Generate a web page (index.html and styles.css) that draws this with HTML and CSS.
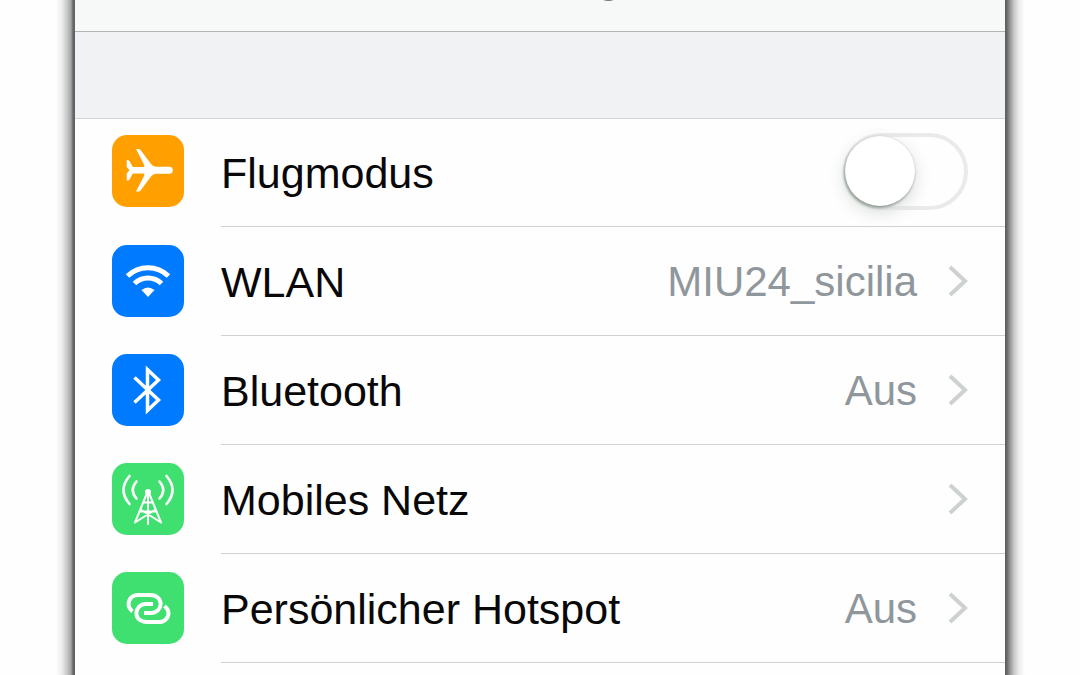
FILE: index.html
```html
<!DOCTYPE html>
<html lang="de">
<head>
<meta charset="utf-8">
<meta name="viewport" content="width=device-width">
<title>Einstellungen</title>
<link rel="stylesheet" href="styles.css">
</head>
<body>
<div class="edge edge-left"></div>
<main class="panel">
  <header class="navbar"><h1 class="title">Einstellungen</h1></header>
  <div class="spacer"></div>
  <ul class="list">
    <li class="item">
      <svg class="icon orange" viewBox="0 0 72 72" aria-hidden="true"><path fill="#fff" d="M14.700 25H16Q17 25 17.800 26.500L20.500 31.500Q21 32 22 32H31Q33 32 32 29.500L24 14H26.500Q28 14 29 15.500L39 29Q41 31.700 44 31.700H57.500C62 31.700 62 38.800 57.500 38.800H44Q41 38.800 39 41.500L29 55Q28 56.500 26.500 56.500H24L32 41Q33 38.500 31 38.500H22Q21 38.500 20.500 39L17.800 44Q17 45.500 16 45.500H14.700V38.500L17.500 35.300L14.700 32Z"/></svg>
      <div class="body">
        <label class="label" for="flight">Flugmodus</label>
        <input class="switch" type="checkbox" role="switch" id="flight">
      </div>
    </li>
    <li><a class="item" href="#wlan">
      <svg class="icon blue" viewBox="0 0 72 72" aria-hidden="true"><g fill="none" stroke="#fff" stroke-width="5"><path d="M15.500 31C27 20 45 20 56.500 31"/><path d="M22.500 38.500C30 31 42 31 49.500 38.500"/></g><path fill="#fff" d="M29.500 45Q36 40 42.500 45L36 52Z"/></svg>
      <div class="body"><span class="label">WLAN</span><span class="value">MIU24_sicilia</span>
      <svg class="chevron" viewBox="0 0 20 34" aria-hidden="true"><path d="M2 3L17 17L2 31"/></svg></div>
    </a></li>
    <li><a class="item" href="#bluetooth">
      <svg class="icon blue" viewBox="0 0 72 72" aria-hidden="true"><path fill="none" stroke="#fff" stroke-width="3.500" d="M22.500 23.500L46.500 46L35.500 56.500V15.500L46.500 26L22.500 48.500"/></svg>
      <div class="body"><span class="label">Bluetooth</span><span class="value">Aus</span>
      <svg class="chevron" viewBox="0 0 20 34" aria-hidden="true"><path d="M2 3L17 17L2 31"/></svg></div>
    </a></li>
    <li><a class="item" href="#mobil">
      <svg class="icon green" viewBox="0 0 72 72" aria-hidden="true"><g fill="none" stroke="#fff" stroke-width="2.600" stroke-linecap="round"><path d="M17.500 13Q5.500 27 17.500 41M24.500 18.500Q17 27 24.500 35.500M54.500 13Q66.500 27 54.500 41M47.500 18.500Q55 27 47.500 35.500"/><path stroke-width="2" stroke-linejoin="round" d="M36 30V61M35 30L23 59.500L43.500 46.500M37 30L49 59.500L28.500 46.500M31.500 39.500H40.500M28 48.500H44"/></g><circle cx="36" cy="29" r="3" fill="#fff"/></svg>
      <div class="body"><span class="label">Mobiles Netz</span>
      <svg class="chevron" viewBox="0 0 20 34" aria-hidden="true"><path d="M2 3L17 17L2 31"/></svg></div>
    </a></li>
    <li><a class="item" href="#hotspot">
      <svg class="icon green" viewBox="0 0 72 72" aria-hidden="true"><g fill="none" stroke="#fff" stroke-width="4"><path d="M20.500 39.500C12.500 32.500 18 23 26 23H38C53 23 51 41 39 41H32"/><path d="M52.500 34C60.500 41 55 50 47 50H35C20 50 22 32 34 32H41"/></g></svg>
      <div class="body"><span class="label">Persönlicher Hotspot</span><span class="value">Aus</span>
      <svg class="chevron" viewBox="0 0 20 34" aria-hidden="true"><path d="M2 3L17 17L2 31"/></svg></div>
    </a></li>
  </ul>
</main>
<div class="edge edge-right"></div>
</body>
</html>
```
FILE: styles.css
```css
* { box-sizing: border-box; }

body {
  display: flex;
  min-height: 100vh;
  margin: 0;
  background: #fefefe;
  color: #080809;
  font-family: "Liberation Sans", Arial, sans-serif;
}

.edge { flex: 0 0 75px; }
.edge-left {
  background: linear-gradient(to left, #5d6062 0, #66696b 2px, #a5a5a5 4px, #c8c8c8 8px, #ececec 13px, #fefefe 19px);
}
.edge-right {
  background: linear-gradient(to right, #5b5b5b 0, #6a6a6a 2px, #969696 5px, #c8c8c8 9px, #ececec 14px, #fefefe 20px);
}

.panel { flex: 1; min-width: 0; }

.navbar {
  display: flex;
  align-items: flex-end;
  justify-content: center;
  height: 32px;
  padding-bottom: 30px;
  overflow: hidden;
  background: #f7f9f8;
  border-bottom: 1px solid #b2b4b5;
}
.title { margin: 0; color: #77797a; font-size: 38px; line-height: 42px; }

.spacer { height: 86px; background: #f0f2f4; }

.list {
  margin: 0;
  padding: 0;
  list-style: none;
  border-top: 1px solid #d3d5d6;
}

.item {
  display: flex;
  align-items: stretch;
  height: 109px;
  padding-left: 37px;
  color: inherit;
  text-decoration: none;
}
li.item { height: 108px; }

.icon {
  flex: none;
  align-self: center;
  width: 72px;
  height: 72px;
  margin: 0 37px 2px 0;
  border-radius: 15px;
}
li.item .icon { margin-bottom: 4px; }
.orange { background: #ff9f00; }
.blue { background: #007aff; }
.green { background: #3fe06f; }

.body {
  display: flex;
  flex: 1;
  align-items: center;
  padding: 0 37px 2px 0;
  border-bottom: 1px solid #d0d1d3;
}

.label, .value {
  padding-top: 3px;
  font-size: 43px;
  line-height: 50px;
  white-space: nowrap;
}
.label { flex: 1; }
.value { color: #8f979c; font-size: 42px; }

.chevron {
  width: 20px;
  height: 34px;
  margin: 1px 0 0 31px;
  fill: none;
  stroke: #ced1d2;
  stroke-width: 4;
}

.switch {
  appearance: none;
  width: 125px;
  height: 77px;
  margin: 0;
  border: 4px solid #e9eaea;
  border-radius: 39px;
  background: #fefefe;
}
.switch::before {
  content: "";
  display: block;
  width: 70px;
  height: 70px;
  margin: -1px 0 0 -2px;
  border-radius: 50%;
  background: #fff;
  box-shadow: -1px 2px 3px #8f9b93, 0 0 2px #c8cccb, 0 6px 18px #d8ddd9;
}
.switch:checked { background: #4cd964; }
.switch:checked::before { margin-left: 49px; }
```
